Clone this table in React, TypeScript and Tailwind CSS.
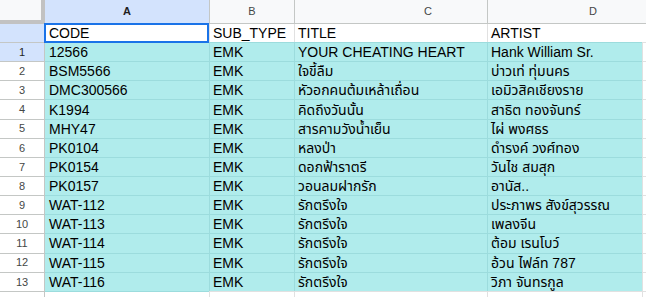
import React from "react";

const rows = [
  ["12566", "EMK", "YOUR CHEATING HEART", "Hank William Sr."],
  ["BSM5566", "EMK", "ใจขี้ลืม", "บ่าวเท่ ทุ่มนคร"],
  ["DMC300566", "EMK", "หัวอกคนต้มเหล้าเถื่อน", "เอมิวสิคเชียงราย"],
  ["K1994", "EMK", "คิดถึงวันนั้น", "สาธิต ทองจันทร์"],
  ["MHY47", "EMK", "สารคามวังน้ำเย็น", "ไผ่ พงศธร"],
  ["PK0104", "EMK", "หลงป่า", "ดำรงค์ วงศ์ทอง"],
  ["PK0154", "EMK", "ดอกฟ้าราตรี", "วันไช สมสุก"],
  ["PK0157", "EMK", "วอนลมฝากรัก", "อานัส.."],
  ["WAT-112", "EMK", "รักตรึงใจ", "ประภาพร สังข์สุวรรณ"],
  ["WAT-113", "EMK", "รักตรึงใจ", "เพลงจีน"],
  ["WAT-114", "EMK", "รักตรึงใจ", "ต้อม เรนโบว์"],
  ["WAT-115", "EMK", "รักตรึงใจ", "อ้วน ไฟล์ท 787"],
  ["WAT-116", "EMK", "รักตรึงใจ", "วิภา จันทรกูล"],
];

const font = { fontFamily: '"Liberation Sans", "Noto Sans Thai", "Noto Sans", sans-serif' };

export default function App() {
  return (
    <div className="w-[646px] h-[297px] overflow-hidden bg-white text-black" style={font}>
      {/* column letters */}
      <div className="flex h-[24px]">
        <div className="w-[45px] shrink-0 bg-[#f8f9fa] border-r-[4px] border-b-[4px] border-[#c2c2c2]" />
        <div className="w-[164px] shrink-0 bg-[#d3e3fd] border-b border-[#c4c7c5] flex items-center justify-center text-[11px] font-bold text-[#1f1f1f]">
          A
        </div>
        <div className="w-[85px] shrink-0 bg-[#f8f9fa] border-l border-b border-[#c4c7c5] flex items-center justify-center text-[11px] text-[#444746]">
          B
        </div>
        <div className="w-[193px] shrink-0 bg-[#f8f9fa] border-l border-b border-[#c4c7c5] flex items-center text-[11px] text-[#444746] pl-[129px]">
          C
        </div>
        <div className="flex-1 bg-[#f8f9fa] border-l border-b border-[#c4c7c5] flex items-center text-[11px] text-[#444746] pl-[101px]">
          D
        </div>
      </div>

      {/* header row */}
      <div className="flex h-[18px] text-[14px] leading-[18px]">
        <div className="w-[45px] shrink-0 bg-[#d3e3fd] border-r border-[#c4c7c5]" />
        <div className="w-[164px] shrink-0 relative pl-[4px]">
          <span>CODE</span>
          <div className="absolute -left-[1px] -top-[1px] w-[165px] h-[20px] border-2 border-[#1a73e8]" />
        </div>
        <div className="w-[85px] shrink-0 border-l border-[#e1e1e1] pl-[3px]">SUB_TYPE</div>
        <div className="w-[193px] shrink-0 border-l border-[#e1e1e1] pl-[3px]">TITLE</div>
        <div className="flex-1 border-l border-[#e1e1e1] pl-[3px]">ARTIST</div>
      </div>

      {/* data rows */}
      {rows.map((r, i) => (
        <div key={i} className="flex h-[19.15px] text-[14px]">
          <div
            className={
              "w-[45px] shrink-0 border-r border-t border-[#c4c7c5] flex items-center justify-center text-[11px] " +
              (i === 0 ? "bg-[#d3e3fd] text-[#1f1f1f]" : "bg-white text-[#444746]")
            }
          >
            {i + 1}
          </div>
          <div className="w-[164px] shrink-0 bg-[#b0ecec] border-t border-[#9cdcdd] pl-[4px] flex items-center pt-[1px]">{r[0]}</div>
          <div className="w-[85px] shrink-0 bg-[#b0ecec] border-t border-l border-[#9cdcdd] pl-[3px] flex items-center pt-[1px]">{r[1]}</div>
          <div className="w-[193px] shrink-0 bg-[#b0ecec] border-t border-l border-[#9cdcdd] pl-[3px] flex items-center pt-[1px] whitespace-nowrap">{r[2]}</div>
          <div className="w-[155px] shrink-0 bg-[#b0ecec] border-t border-l border-[#9cdcdd] pl-[3px] flex items-center pt-[1px] whitespace-nowrap">{r[3]}</div>
          <div className="flex-1 border-t border-l border-[#e1e1e1]" />
        </div>
      ))}

      {/* row 14, cut off */}
      <div className="flex h-[20px]">
        <div className="w-[45px] shrink-0 border-r border-t border-[#c4c7c5] flex items-start justify-center pt-[3px] text-[11px] text-[#444746]">
          14
        </div>
        <div className="w-[164px] shrink-0 border-t border-[#9cdcdd]" />
        <div className="w-[85px] shrink-0 border-t border-l border-[#e1e1e1]" />
        <div className="w-[193px] shrink-0 border-t border-l border-[#e1e1e1]" />
        <div className="w-[155px] shrink-0 border-t border-l border-[#e1e1e1]" />
        <div className="flex-1 border-t border-l border-[#e1e1e1]" />
      </div>
    </div>
  );
}
